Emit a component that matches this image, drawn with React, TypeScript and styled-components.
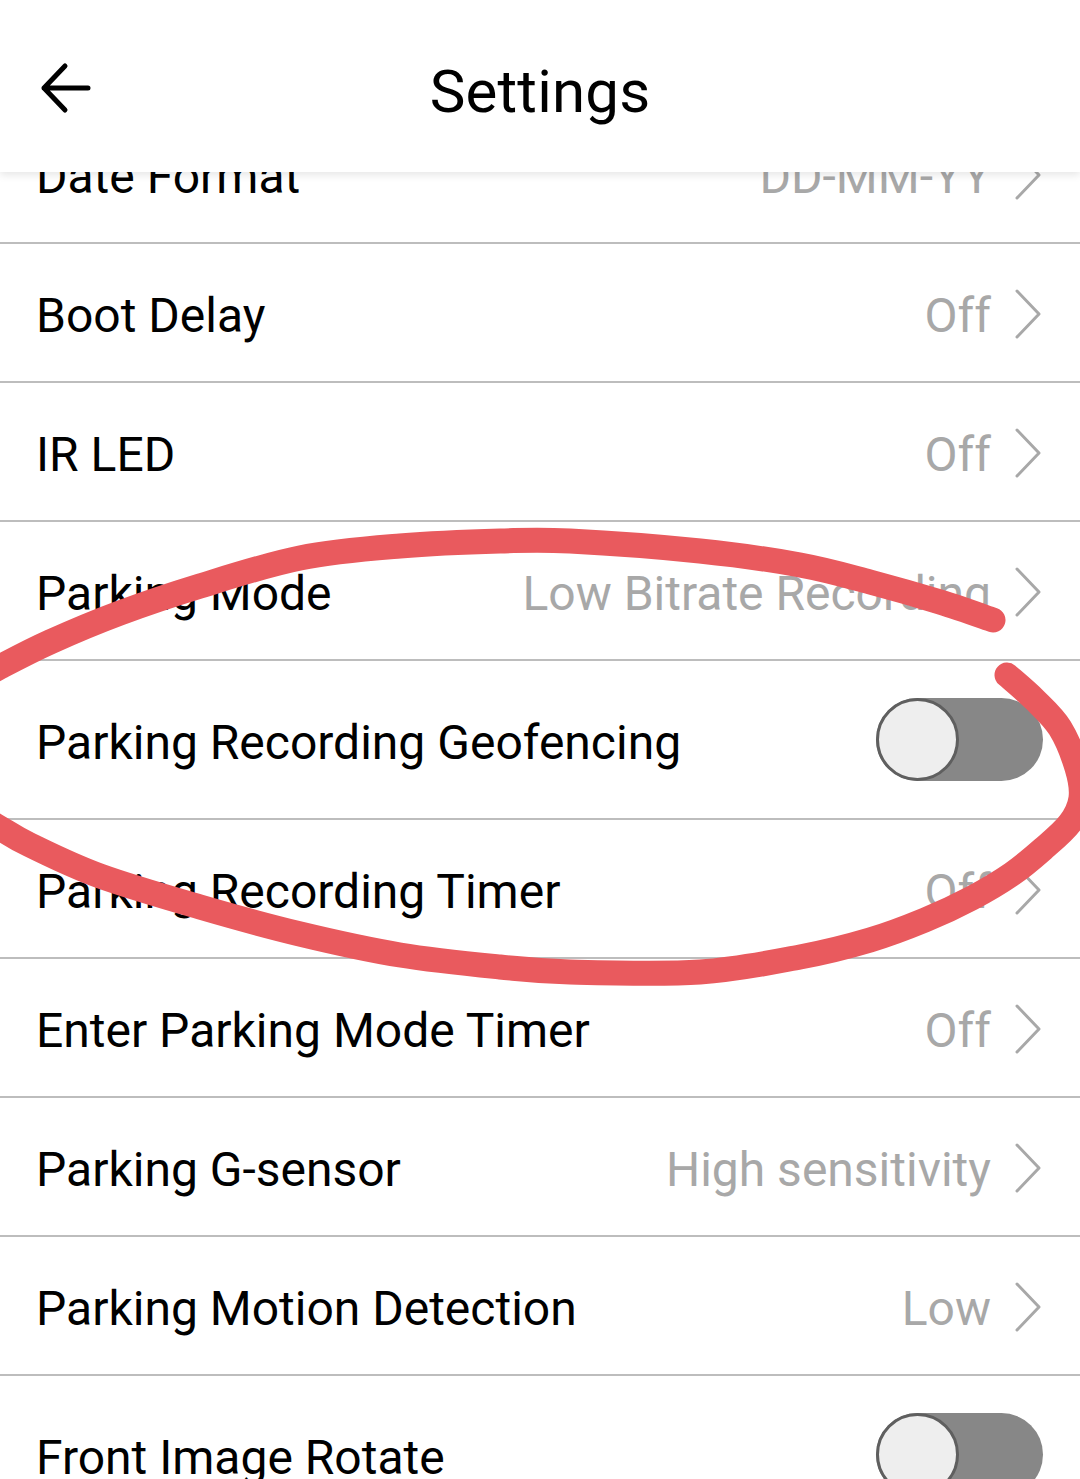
import React from "react";
import styled, { createGlobalStyle } from "styled-components";

const GlobalStyle = createGlobalStyle`
  html, body {
    margin: 0;
    padding: 0;
    background: #ffffff;
  }
  body {
    font-family: Roboto, "Noto Sans", "Liberation Sans", sans-serif;
    color: #000;
  }
`;

const Screen = styled.div`
  position: relative;
  width: 1080px;
  height: 1479px;
  overflow: hidden;
  background: #ffffff;
`;

const Header = styled.header`
  position: absolute;
  top: 0;
  left: 0;
  right: 0;
  height: 172px;
  background: #ffffff;
  display: flex;
  align-items: center;
  justify-content: center;
  box-shadow: 0 3px 8px rgba(0, 0, 0, 0.1);
  z-index: 2;
`;

const BackButton = styled.button`
  position: absolute;
  left: 36px;
  top: 58px;
  width: 60px;
  height: 60px;
  padding: 0;
  border: none;
  background: transparent;
  display: flex;
  align-items: center;
  justify-content: center;
`;

const Title = styled.h1`
  margin: 0;
  padding-top: 10px;
  font-size: 60px;
  font-weight: 400;
  letter-spacing: 0.2px;
  color: #000;
`;

const List = styled.div`
  display: flex;
  flex-direction: column;
  padding-top: 105px;
`;

const Row = styled.div<{ $tall?: boolean }>`
  display: flex;
  align-items: center;
  justify-content: space-between;
  height: ${(p) => (p.$tall ? 157 : 137)}px;
  padding: 0 37px 0 36px;
  border-bottom: 2px solid #bdbdbd;
  flex-shrink: 0;
`;

const Label = styled.span`
  font-size: 48px;
  font-weight: 400;
  color: #000;
  padding-top: 6px;
  white-space: nowrap;
`;

const ValueGroup = styled.div`
  display: flex;
  align-items: center;
  gap: 22px;
`;

const Value = styled.span`
  font-size: 48px;
  font-weight: 400;
  color: #a8a8a8;
  padding-top: 6px;
  white-space: nowrap;
`;

const Chevron = styled.svg`
  width: 30px;
  height: 52px;
  display: block;
  margin-top: 2px;
`;

const Track = styled.div`
  position: relative;
  width: 167px;
  height: 83px;
  border-radius: 42px;
  background: #878787;
  display: flex;
  align-items: center;
`;

const Knob = styled.div`
  width: 77px;
  height: 77px;
  border-radius: 50%;
  background: #eeeeee;
  border: 3px solid #5f5f5f;
`;

const Annotation = styled.svg`
  position: absolute;
  left: 0;
  top: 0;
  width: 1080px;
  height: 1479px;
  pointer-events: none;
  z-index: 1;
`;

type Item = { label: string; value?: string; toggle?: boolean };

const items: Item[] = [
  { label: "Date Format", value: "DD-MM-YY" },
  { label: "Boot Delay", value: "Off" },
  { label: "IR LED", value: "Off" },
  { label: "Parking Mode", value: "Low Bitrate Recording" },
  { label: "Parking Recording Geofencing", toggle: true },
  { label: "Parking Recording Timer", value: "Off" },
  { label: "Enter Parking Mode Timer", value: "Off" },
  { label: "Parking G-sensor", value: "High sensitivity" },
  { label: "Parking Motion Detection", value: "Low" },
  { label: "Front Image Rotate", toggle: true },
];

type P = [number, number];

function smooth(pts: P[]): string {
  let d = `M${pts[0][0]} ${pts[0][1]}`;
  for (let i = 0; i < pts.length - 1; i++) {
    const p0 = pts[i - 1] || pts[i];
    const p1 = pts[i];
    const p2 = pts[i + 1];
    const p3 = pts[i + 2] || p2;
    const c1x = p1[0] + (p2[0] - p0[0]) / 6;
    const c1y = p1[1] + (p2[1] - p0[1]) / 6;
    const c2x = p2[0] - (p3[0] - p1[0]) / 6;
    const c2y = p2[1] - (p3[1] - p1[1]) / 6;
    d += ` C${c1x.toFixed(1)} ${c1y.toFixed(1)} ${c2x.toFixed(1)} ${c2y.toFixed(1)} ${p2[0]} ${p2[1]}`;
  }
  return d;
}

const topStroke: P[] = [
  [-15, 676],
  [0, 667],
  [50, 642],
  [120, 613],
  [200, 586],
  [300, 558],
  [400, 546],
  [500, 541],
  [570, 541],
  [700, 551],
  [800, 565],
  [870, 582],
  [940, 602],
  [993, 620],
];

const lowerStroke: P[] = [
  [1007, 675],
  [1035, 700],
  [1060, 728],
  [1077, 768],
  [1081, 798],
  [1070, 823],
  [1043, 849],
  [1012, 874],
  [972, 898],
  [925, 920],
  [870, 940],
  [800, 957],
  [700, 972],
  [570, 972],
  [500, 967],
  [400, 955],
  [300, 934],
  [200, 907],
  [100, 876],
  [30, 845],
  [0, 828],
  [-15, 819],
];

function ChevronIcon() {
  return (
    <Chevron viewBox="0 0 30 52">
      <polyline
        points="4,3 26,26 4,49"
        fill="none"
        stroke="#a8a8a8"
        strokeWidth="3"
        strokeLinecap="round"
        strokeLinejoin="round"
      />
    </Chevron>
  );
}

function Toggle() {
  return (
    <Track>
      <Knob />
    </Track>
  );
}

export default function App() {
  return (
    <>
      <GlobalStyle />
      <Screen>
        <Header>
          <BackButton aria-label="Back">
            <svg width="60" height="60" viewBox="0 0 60 60">
              <path
                d="M8 30 H52 M29 8 L8 30 L29 52"
                fill="none"
                stroke="#000"
                strokeWidth="5"
                strokeLinecap="round"
                strokeLinejoin="round"
              />
            </svg>
          </BackButton>
          <Title>Settings</Title>
        </Header>
        <List>
          {items.map((it) => (
            <Row key={it.label} $tall={it.toggle}>
              <Label>{it.label}</Label>
              {it.toggle ? (
                <Toggle />
              ) : (
                <ValueGroup>
                  <Value>{it.value}</Value>
                  <ChevronIcon />
                </ValueGroup>
              )}
            </Row>
          ))}
        </List>
        <Annotation viewBox="0 0 1080 1479">
          <g fill="none" stroke="#e95a5e" strokeWidth="25" strokeLinecap="round" strokeLinejoin="round">
            <path d={smooth(topStroke)} />
            <path d={smooth(lowerStroke)} />
          </g>
        </Annotation>
      </Screen>
    </>
  );
}
